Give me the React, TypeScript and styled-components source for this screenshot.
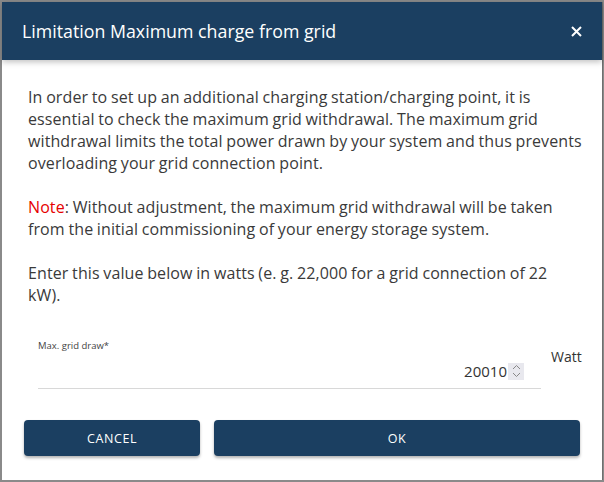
import styled, { createGlobalStyle } from 'styled-components';

const Global = createGlobalStyle`
  html, body { margin: 0; padding: 0; }
  body {
    background: #8a8a8a;
    font-family: 'Open Sans', Lato, 'Liberation Sans', sans-serif;
  }
`;

const Backdrop = styled.div`
  width: 604px;
  height: 482px;
  padding: 2px;
  box-sizing: border-box;
`;

const Dialog = styled.div`
  width: 600px;
  height: 478px;
  background: #fff;
  display: flex;
  flex-direction: column;
  box-shadow: 1px 0 0 #6f6f6f;
`;

const Header = styled.div`
  height: 58px;
  background: #1b3f61;
  display: flex;
  align-items: center;
  justify-content: space-between;
  padding: 0 18px 0 20px;
  box-shadow: 0 2px 6px rgba(0, 0, 0, 0.25);
  position: relative;
  z-index: 1;
`;

const Title = styled.h2`
  margin: 0;
  color: #fff;
  font-weight: 400;
  font-size: 17.8px;
`;

const Close = styled.button`
  border: none;
  background: none;
  color: #fff;
  padding: 0;
  width: 16px;
  height: 16px;
  display: flex;
  align-items: center;
  justify-content: center;
  cursor: pointer;
`;

const Body = styled.div`
  flex: 1;
  padding: 26px 20px 0 26px;
  color: #3a3a3a;
  font-size: 16px;
  letter-spacing: 0.1px;
  word-spacing: -0.6px;
  line-height: 22px;
`;

const Para = styled.p`
  margin: 0 0 22px;
`;

const Note = styled.span`
  color: #e60000;
`;

const FieldRow = styled.div`
  display: flex;
  align-items: flex-start;
  gap: 10px;
  padding: 12px 0 0 10px;
  letter-spacing: 0;
  word-spacing: 0;
`;

const Field = styled.div`
  width: 503px;
  border-bottom: 1px solid #d8d8d8;
  padding-bottom: 7px;
`;

const Label = styled.div`
  font-size: 9.5px;
  line-height: 12px;
  color: #444;
`;

const ValueLine = styled.div`
  display: flex;
  justify-content: flex-end;
  align-items: center;
  margin-top: 9px;
  padding-right: 17px;
  font-size: 15px;
  line-height: 20px;
  color: #333;
`;

const Spinner = styled.span`
  width: 16px;
  height: 17px;
  background: #e8e8ee;
  margin-left: 1px;
  display: flex;
  align-items: center;
  justify-content: center;
`;

const Unit = styled.div`
  font-size: 14px;
  color: #333;
  margin-top: 6px;
`;

const Actions = styled.div`
  display: flex;
  gap: 14px;
  padding: 0 22px 24px 22px;
`;

const Button = styled.button<{ $grow?: boolean }>`
  flex: ${(p) => (p.$grow ? 1 : '0 0 176px')};
  height: 36px;
  border: none;
  border-radius: 4px;
  background: #1b3f61;
  color: #fff;
  font-family: inherit;
  font-size: 12.5px;
  letter-spacing: 0.6px;
  box-shadow: 0 2px 3px rgba(0, 0, 0, 0.3);
  cursor: pointer;
`;

export default function App() {
  return (
    <Backdrop>
      <Global />
      <Dialog>
        <Header>
          <Title>Limitation Maximum charge from grid</Title>
          <Close aria-label="close">
            <svg width="11" height="11" viewBox="0 0 11 11">
              <path d="M1 1L10 10M10 1L1 10" stroke="#fff" strokeWidth="2" />
            </svg>
          </Close>
        </Header>
        <Body>
          <Para>
            In order to set up an additional charging station/charging point, it is essential to
            check the maximum grid withdrawal. The maximum grid withdrawal limits the total power
            drawn by your system and thus prevents overloading your grid connection point.
          </Para>
          <Para>
            <Note>Note</Note>: Without adjustment, the maximum grid withdrawal will be taken from the
            initial commissioning of your energy storage system.
          </Para>
          <Para>Enter this value below in watts (e. g. 22,000 for a grid connection of 22 kW).</Para>
          <FieldRow>
            <Field>
              <Label>Max. grid draw*</Label>
              <ValueLine>
                20010
                <Spinner>
                  <svg width="9" height="14" viewBox="0 0 9 14">
                    <path d="M1 5L4.5 1.5L8 5M1 9L4.5 12.5L8 9" stroke="#888" strokeWidth="1" fill="none" />
                  </svg>
                </Spinner>
              </ValueLine>
            </Field>
            <Unit>Watt</Unit>
          </FieldRow>
        </Body>
        <Actions>
          <Button>CANCEL</Button>
          <Button $grow>OK</Button>
        </Actions>
      </Dialog>
    </Backdrop>
  );
}
